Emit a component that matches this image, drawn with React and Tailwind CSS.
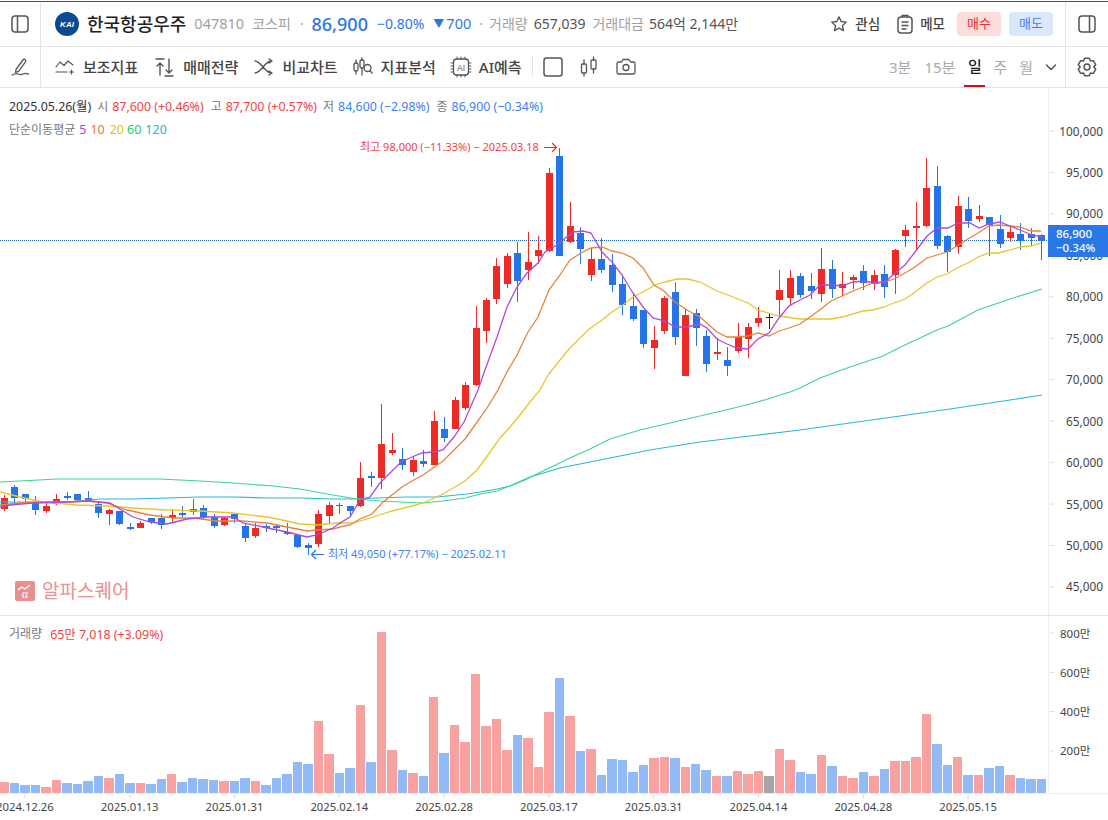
import React from "react";

// [몸통 위, 몸통 아래, 꼬리 위, 꼬리 아래, 색]
const CANDLES = [
  [498,509,495,511,"r"],[487,498,485,504,"b"],[494,499,494,503,"b"],[502,510,496,515,"b"],[506,511,503,513,"r"],
  [499,504,494,505,"r"],[496,498,492,500,"b"],[494,500,494,501,"b"],[498,501,491,502,"b"],[504,513,502,518,"b"],
  [510,514,509,525,"r"],[511,524,511,525,"b"],[527,529,523,530,"b"],[523,528,521,528,"r"],[518,522,518,524,"b"],
  [518,525,514,529,"b"],[515,518,509,522,"r"],[513,515,506,518,"b"],[509,512,499,515,"b"],[508,517,505,520,"b"],
  [517,526,514,528,"b"],[518,525,517,526,"r"],[514,519,513,523,"b"],[526,538,523,542,"b"],[528,536,523,538,"r"],
  [526,528,524,532,"b"],[526,528,524,533,"b"],[532,534,523,535,"b"],[535,547,535,548,"b"],[545,548,543,555,"b"],
  [514,544,510,547,"r"],[505,516,502,523,"r"],[505,506,503,514,"b"],[506,511,506,516,"b"],[478,506,462,507,"r"],
  [476,478,472,487,"b"],[444,478,404,489,"r"],[450,453,433,455,"r"],[459,465,448,470,"b"],[460,472,456,476,"r"],
  [461,464,450,467,"b"],[421,465,411,465,"r"],[429,438,417,442,"b"],[400,429,397,429,"r"],[385,408,382,410,"r"],
  [328,385,306,386,"r"],[300,331,298,343,"r"],[266,299,258,304,"r"],[256,284,253,288,"r"],[253,281,242,302,"b"],
  [262,270,232,280,"r"],[250,256,236,264,"r"],[173,251,168,252,"r"],[156,256,148,256,"b"],[226,242,202,243,"r"],
  [233,249,227,264,"b"],[259,275,248,281,"r"],[259,270,238,273,"b"],[265,285,254,292,"b"],[284,305,275,315,"b"],
  [306,319,294,321,"b"],[310,344,310,348,"b"],[340,348,326,369,"r"],[298,331,296,334,"r"],[292,337,282,345,"b"],
  [315,376,309,376,"r"],[313,328,309,346,"b"],[336,364,330,372,"b"],[352,354,338,360,"r"],[360,366,347,376,"b"],
  [337,351,323,353,"r"],[327,339,323,358,"r"],[318,323,307,327,"r"],[317,318,313,329,"k"],[290,300,270,316,"r"],
  [278,298,270,306,"r"],[276,295,273,298,"b"],[286,291,273,299,"b"],[269,294,248,302,"r"],[269,289,260,298,"b"],
  [284,288,272,296,"r"],[277,280,275,289,"r"],[271,283,265,290,"b"],[275,284,270,290,"r"],[274,287,265,298,"b"],
  [250,275,249,294,"r"],[230,236,225,247,"r"],[226,228,202,250,"r"],[188,226,158,227,"r"],[186,246,166,249,"b"],
  [236,252,235,272,"b"],[206,247,196,254,"r"],[209,221,197,228,"b"],[216,219,205,222,"r"],[217,225,217,256,"b"],
  [229,244,215,248,"b"],[232,238,227,242,"r"],[234,241,223,250,"b"],[234,238,228,246,"b"],[235,241,234,260,"b"],
];

const MA5 = "0,507 10,505 33,503 67,502 90,501 110,503 133,517 150,522 167,524 187,519 207,517 233,517 243,523 263,527 287,532 307,537 317,535 333,528 340,523 350,517 360,500 370,497 380,483 391,472 401,462 412,457 422,453 433,452 443,450 454,437 464,422 478,390 485,370 497,337 507,307 517,287 527,273 538,263 545,252 557,245 563,240 573,232 583,231 591,233 602,252 612,262 622,275 633,293 643,307 653,318 665,321 675,327 687,327 700,324 707,328 717,339 727,344 737,348 748,349 758,339 769,333 779,318 789,306 800,300 810,295 820,285 832,285 842,286 853,282 865,281 875,283 885,282 895,273 905,265 915,252 927,236 937,228 948,228 958,223 970,223 979,228 989,224 1000,222 1010,226 1020,230 1032,235 1042,237";
const MA10 = "0,505 20,503 43,502 67,502 87,501 107,503 127,510 150,515 173,518 193,518 217,521 243,521 267,523 287,527 307,531 317,530 333,529 340,527 350,525 360,519 372,514 382,503 402,487 412,481 423,475 433,468 443,461 454,450 465,439 475,425 487,408 498,390 507,372 517,355 528,332 538,317 549,290 560,275 570,260 581,253 591,248 602,247 612,251 622,253 633,258 643,268 654,285 664,291 675,302 687,310 700,317 717,332 727,337 737,337 748,336 758,333 769,336 779,331 789,328 800,324 810,317 821,309 831,301 842,296 853,291 863,287 873,283 884,282 894,279 905,273 915,267 927,258 937,255 947,252 957,246 968,239 978,233 989,226 999,225 1010,226 1020,227 1031,231 1041,231";
const MA20 = "0,492 20,497 43,502 77,505 107,506 133,508 167,510 200,511 233,513 267,517 287,521 300,524 317,525 337,523 353,523 370,518 392,511 412,506 423,503 443,494 465,481 477,470 488,455 500,438 510,427 520,415 530,402 540,390 548,375 560,360 570,348 588,330 602,320 612,312 623,305 633,297 643,292 655,285 665,282 677,279 688,279 700,282 717,291 733,297 748,303 758,310 779,316 800,319 820,319 831,319 842,317 863,311 873,310 884,307 894,303 905,299 915,292 927,283 937,277 947,274 957,268 968,263 978,257 989,253 999,253 1010,250 1020,247 1031,246 1041,243";
const MA60 = "0,482 20,481 57,479 107,479 160,479 200,481 233,483 273,486 300,489 333,495 357,499 380,501 400,502 423,503 443,501 465,498 480,494 497,491 510,486 525,480 545,470 570,458 590,449 610,439 640,430 670,423 700,416 730,409 750,404 768,399 780,395 790,392 800,388 820,378 850,367 883,356 907,344 937,330 948,326 978,310 1010,299 1042,289";
const MA120 = "0,502 33,502 67,502 100,499 133,499 167,498 200,497 233,497 267,498 300,498 333,499 353,499 377,498 407,497 437,497 467,494 480,492 497,489 510,486 530,477 560,468 600,460 650,450 700,442 750,436 800,430 850,423 900,416 950,409 1010,400 1042,395";

// 막대 윗변 y
const VOLUMES = [
  [782,"r"],[783,"b"],[785,"b"],[785,"b"],[787,"r"],[780,"r"],[783,"b"],[784,"b"],[781,"b"],[776,"b"],
  [778,"r"],[774,"b"],[783,"b"],[783,"r"],[784,"b"],[779,"b"],[774,"r"],[782,"b"],[778,"b"],[779,"b"],
  [780,"b"],[781,"r"],[781,"b"],[778,"b"],[781,"r"],[785,"b"],[778,"b"],[774,"b"],[762,"b"],[764,"b"],
  [721,"r"],[754,"r"],[773,"b"],[768,"b"],[705,"r"],[762,"b"],[632,"r"],[750,"r"],[770,"b"],[773,"r"],
  [776,"b"],[697,"r"],[753,"b"],[725,"r"],[742,"r"],[674,"r"],[726,"r"],[719,"r"],[750,"r"],[735,"b"],
  [738,"r"],[767,"r"],[712,"r"],[678,"b"],[716,"r"],[751,"b"],[749,"r"],[775,"b"],[759,"b"],[760,"b"],
  [772,"b"],[765,"b"],[758,"r"],[757,"r"],[758,"b"],[767,"r"],[764,"b"],[770,"b"],[776,"r"],[776,"b"],
  [771,"r"],[774,"r"],[771,"r"],[776,"g"],[749,"r"],[760,"r"],[772,"b"],[774,"b"],[755,"r"],[766,"b"],
  [776,"r"],[778,"r"],[772,"b"],[776,"r"],[769,"b"],[761,"r"],[761,"r"],[757,"r"],[714,"r"],[744,"b"],
  [765,"b"],[757,"r"],[775,"b"],[775,"r"],[768,"b"],[766,"b"],[775,"r"],[778,"b"],[779,"b"],[779,"b"],
];

const CANDLE_COLOR = { r: "#ee2a26", b: "#2575e8", k: "#222222" };
const VOLUME_COLOR = { r: "#f7a1a1", b: "#92bbf5", g: "#a6a6a6" };
const PRICES = ["100,000","95,000","90,000","85,000","80,000","75,000","70,000","65,000","60,000","55,000","50,000","45,000"];
const DATES = ["2024.12.26","2025.01.13","2025.01.31","2025.02.14","2025.02.28","2025.03.17","2025.03.31","2025.04.14","2025.04.28","2025.05.15"];

const centerX = (i) => Math.round(3.9 + 10.48 * i);

// 여섯 돌기 톱니바퀴 외곽선
const gearPoints = () => {
  const pts = [];
  for (let k = 0; k < 6; k++) {
    const a = -90 + k * 60;
    [[-30, 8.2], [-15, 10.8], [15, 10.8]].forEach(([d, r]) => {
      const t = ((a + d) * Math.PI) / 180;
      pts.push(`${(12 + r * Math.cos(t)).toFixed(2)},${(12 + r * Math.sin(t)).toFixed(2)}`);
    });
  }
  return pts.join(" ");
};

function Icon({ className = "", w = 20, h = 20, children }) {
  return (
    <svg width={w} height={h} viewBox={`0 0 ${w} ${h}`} fill="none" stroke="#555555" strokeWidth="1.5" strokeLinecap="round" strokeLinejoin="round" className={`shrink-0 ${className}`}>
      {children}
    </svg>
  );
}

function PriceChart() {
  return (
    <svg width="1048" height="527" viewBox="0 88 1048 527" className="block">
      <line x1="0" y1="240.5" x2="1048" y2="240.5" stroke="#1f66c9" strokeWidth="1" strokeDasharray="1 1" />
      {CANDLES.map((c, i) => {
        const x = centerX(i);
        const color = CANDLE_COLOR[c[4]];
        return (
          <g key={i} shapeRendering="crispEdges">
            <rect x={x} y={c[2]} width="1" height={c[3] - c[2]} fill={color} />
            {c[4] === "k"
              ? <rect x={x - 3} y={c[0]} width="7" height="1" fill={color} />
              : <rect x={x - 3} y={c[0]} width="7" height={c[1] - c[0]} fill={color} />}
          </g>
        );
      })}
      <polyline points={MA120} fill="none" stroke="#2bb8d8" strokeWidth="1.150" />
      <polyline points={MA60} fill="none" stroke="#3dd68c" strokeWidth="1.150" />
      <polyline points={MA20} fill="none" stroke="#e8c62e" strokeWidth="1.300" />
      <polyline points={MA10} fill="none" stroke="#e8833a" strokeWidth="1.300" />
      <polyline points={MA5} fill="none" stroke="#b04ad8" strokeWidth="1.300" />
      <path d="M544 147.500h12M552 143l4.500 4.500-4.500 4.500" fill="none" stroke="#ee2a26" strokeWidth="1.200" />
      <path d="M324 554.500h-12M316 550l-4.500 4.500 4.500 4.500" fill="none" stroke="#2575e8" strokeWidth="1.200" />
    </svg>
  );
}

function VolumeChart() {
  return (
    <svg width="1048" height="177" viewBox="0 616 1048 177" className="block" shapeRendering="crispEdges">
      {VOLUMES.map((v, i) => {
        const left = Math.round(3.9 + 10.48 * i - 4.6);
        const right = Math.round(3.9 + 10.48 * i + 4.9);
        return <rect key={i} x={left} y={v[0]} width={right - left} height={793 - v[0]} fill={VOLUME_COLOR[v[1]]} />;
      })}
    </svg>
  );
}

function PriceAxis() {
  return (
    <svg width="60" height="527" viewBox="1048 88 60 527" className="block">
      {PRICES.map((p, i) => {
        const y = 131 + 41.45 * i;
        return (
          <g key={p}>
            <line x1="1048" y1={y} x2="1053" y2={y} stroke="#dddddd" />
            <text x="1102" y={y + 4.5} textAnchor="end" fontSize="11.800" fill="#444444">{p}</text>
          </g>
        );
      })}
    </svg>
  );
}

function VolumeAxis() {
  return (
    <svg width="60" height="177" viewBox="1048 616 60 177" className="block">
      {["800만","600만","400만","200만"].map((p, i) => {
        const y = 633 + 39.3 * i;
        return (
          <g key={p}>
            <line x1="1048" y1={y} x2="1053" y2={y} stroke="#dddddd" />
            <text x="1059" y={y + 4.5} fontSize="11.500" fill="#444444">{p}</text>
          </g>
        );
      })}
    </svg>
  );
}

export default function App() {
  return (
    <div className="w-[1108px] h-[820px] overflow-hidden bg-white flex flex-col font-['Noto_Sans','Noto_Sans_CJK_KR',sans-serif] text-[#444444]">
      <div className="h-[2px] bg-white border-b border-[#c01f1f]" />

      {/* 상단 종목 정보 */}
      <div className="h-[45px] flex items-center border-b border-[#e4e4e4]">
        <div className="w-[41px] h-full flex items-center justify-center border-r border-[#e4e4e4]">
          <Icon w={18} h={18}>
            <rect x="1" y="1" width="16" height="16" rx="3" />
            <path d="M6.500 1v16" />
          </Icon>
        </div>
        <div className="flex-1 flex items-center pl-[14px] whitespace-nowrap">
          <svg width="24" height="24" viewBox="0 0 24 24" className="shrink-0">
            <circle cx="12" cy="12" r="12" fill="#0b4a8f" />
            <text x="12" y="15" textAnchor="middle" fontSize="8" fontWeight="700" fontStyle="italic" fill="#ffffff" fontFamily="Liberation Sans">KAI</text>
          </svg>
          <span className="ml-2 text-[18px] font-medium text-[#222222]">한국항공우주</span>
          <span className="ml-2 text-[14.500px] text-[#a0a0a0]">047810</span>
          <span className="ml-2 text-sm text-[#a0a0a0]">코스피</span>
          <span className="ml-[9px] text-sm text-[#a0a0a0]">·</span>
          <span className="ml-2 text-[18px] font-medium text-[#2a77e8]">86,900</span>
          <span className="ml-[9px] text-sm text-[#2a77e8]">−0.80%</span>
          <span className="ml-[9px] text-[11px] text-[#2a77e8]">▼</span>
          <span className="ml-[2px] text-[14.500px] text-[#2a77e8]">700</span>
          <span className="ml-2 text-sm text-[#a0a0a0]">·</span>
          <span className="ml-[6px] text-sm text-[#a0a0a0]">거래량</span>
          <span className="ml-[6px] text-sm text-[#555555]">657,039</span>
          <span className="ml-[7px] text-sm text-[#a0a0a0]">거래대금</span>
          <span className="ml-[5px] text-sm text-[#555555]">564억 2,144만</span>
        </div>
        <div className="flex items-center mr-3">
          <svg width="18" height="18" viewBox="0 0 24 24" fill="none" stroke="#555555" strokeWidth="1.800" strokeLinejoin="round" className="shrink-0">
            <path d="M12 2.500l2.900 6.200 6.800.8-5 4.600 1.300 6.700-6-3.300-6 3.300 1.300-6.700-5-4.600 6.800-.8z" />
          </svg>
          <span className="ml-[7px] text-[13.500px] font-medium">관심</span>
          <Icon className="ml-[16px]" w={18} h={20}>
            <rect x="2" y="3" width="14" height="16" rx="3" />
            <path d="M6 3V1.500h6V3M6 8h6M6 11.500h6M6 15h4" strokeWidth="1.300" />
          </Icon>
          <span className="ml-[6px] text-[13.500px] font-medium">메모</span>
          <button className="ml-3 w-[44px] h-[24px] rounded bg-[#fddcdc] text-[13px] text-[#f03030]">매수</button>
          <button className="ml-2 w-[44px] h-[24px] rounded bg-[#dbe7fc] text-[13px] text-[#3b82f6]">매도</button>
        </div>
        <div className="w-[43px] h-full flex items-center justify-center border-l border-[#e4e4e4]">
          <Icon w={18} h={18}>
            <rect x="1" y="1" width="16" height="16" rx="3" />
            <path d="M11.500 1v16" />
          </Icon>
        </div>
      </div>

      {/* 도구 모음 */}
      <div className="h-[41px] flex items-center border-b border-[#e4e4e4]">
        <div className="w-[41px] h-full flex items-center justify-center border-r border-[#e4e4e4]">
          <Icon w={20} h={20}>
            <path d="M6 12.500l7-9.500a1.500 1.500 0 0 1 2.500 1.800l-7 9.500-3 1.200z" strokeWidth="1.300" />
            <path d="M2 18c3-1.500 5-2 6.500-1s3 1 5-.2 3 .2 5 .2" strokeWidth="1.300" />
          </Icon>
        </div>
        <div className="flex-1 flex items-center pl-[14px] text-[15px] font-medium whitespace-nowrap">
          <Icon w={20} h={20}>
            <path d="M1 10l4-5 4 3.500L13 4l5 4" strokeWidth="1.200" />
            <path d="M1 15h11M14.500 15h4M16.500 13v4" strokeWidth="1.200" />
          </Icon>
          <span className="ml-2">보조지표</span>
          <Icon className="ml-[17px]" w={20} h={20}>
            <path d="M1 2h8M5 18V6M2 9l3-3 3 3M14 2v14M11 13l3 3 3-3M10 19h8" strokeWidth="1.400" />
          </Icon>
          <span className="ml-2">매매전략</span>
          <Icon className="ml-[16px]" w={20} h={20}>
            <path d="M1 4c6 0 10 12 16 12M1 16c6 0 10-12 16-12M15 2l3 2-3 2M15 14l3 2-3 2" strokeWidth="1.400" />
          </Icon>
          <span className="ml-2">비교차트</span>
          <Icon className="ml-[15px]" w={20} h={20}>
            <rect x="1" y="6" width="4" height="8" rx="1.500" strokeWidth="1.300" />
            <path d="M3 3v3M3 14v3" strokeWidth="1.300" />
            <rect x="7" y="3" width="4" height="8" rx="1.500" strokeWidth="1.300" />
            <path d="M9 1v2M9 11v7" strokeWidth="1.300" />
            <circle cx="14.500" cy="11" r="3.500" strokeWidth="1.300" />
            <path d="M17 13.500l2 2.500" strokeWidth="1.300" />
          </Icon>
          <span className="ml-2">지표분석</span>
          <Icon className="ml-[14px]" w={22} h={22}>
            <rect x="3.500" y="3" width="15" height="16" rx="3" strokeWidth="1.300" />
            <path d="M1 7h2M1 10h2M1 13h2M1 16h2M19 7h2M19 10h2M19 13h2M19 16h2M7 1v2M11 1v2M15 1v2M7 19v2M11 19v2M15 19v2" strokeWidth="1" />
            <text x="11" y="14.500" textAnchor="middle" fontSize="8.500" fontWeight="500" fill="#555555" stroke="none" fontFamily="Liberation Sans">AI</text>
          </Icon>
          <span className="ml-[7px]">AI예측</span>
          <div className="ml-[10px] w-px h-[20px] bg-[#e4e4e4]" />
          <Icon className="ml-[10px]" w={20} h={20}>
            <rect x="1" y="1" width="18" height="18" rx="2.500" strokeWidth="1.500" />
          </Icon>
          <Icon className="ml-[17px]" w={18} h={22}>
            <rect x="1.500" y="8" width="5" height="9" rx="1" strokeWidth="1.300" />
            <path d="M4 4v4M4 17v3" strokeWidth="1.300" />
            <rect x="11" y="4" width="5" height="9" rx="1" strokeWidth="1.300" />
            <path d="M13.500 1v3M13.500 13v4" strokeWidth="1.300" />
          </Icon>
          <Icon className="ml-[18px]" w={20} h={20}>
            <path d="M2.500 5h3l1.500-2.500h6L14.500 5h3a1.500 1.500 0 0 1 1.500 1.500v9a1.500 1.500 0 0 1-1.500 1.500h-15a1.500 1.500 0 0 1-1.500-1.500v-9a1.500 1.500 0 0 1 1.500-1.500z" strokeWidth="1.300" />
            <circle cx="10" cy="10.500" r="3" strokeWidth="1.300" />
          </Icon>
        </div>
        <div className="flex items-center h-full text-[15px] text-[#aaaaaa] pr-2">
          <span>3분</span>
          <span className="ml-[13px]">15분</span>
          <div className="ml-[9px] w-[21px] h-full flex items-center justify-center border-b-2 border-[#cc1111] text-[#222222] font-medium">일</div>
          <span className="ml-2">주</span>
          <span className="ml-3">월</span>
          <Icon className="ml-3" w={12} h={12}>
            <path d="M1.500 4l4.500 4.500L10.500 4" />
          </Icon>
        </div>
        <div className="w-[43px] h-full flex items-center justify-center border-l border-[#e4e4e4]">
          <svg width="20" height="20" viewBox="0 0 24 24" fill="none" stroke="#555555" strokeWidth="1.800" strokeLinejoin="round" className="shrink-0">
            <polygon points={gearPoints()} />
            <circle cx="12" cy="12" r="3.500" />
          </svg>
        </div>
      </div>

      {/* 가격 차트 */}
      <div className="h-[528px] flex border-b border-[#e4e4e4]">
        <div className="relative w-[1048px]">
          <PriceChart />
          <div className="absolute left-[9px] top-[10px] text-[12.400px] whitespace-nowrap">
            <div className="flex h-[18px] items-center">
              <span className="text-[#333333]">2025.05.26(월)</span>
              <span className="ml-[6px] text-xs text-[#777777]">시</span>
              <span className="ml-1 text-[#ef4444]">87,600 (+0.46%)</span>
              <span className="ml-[7px] text-xs text-[#777777]">고</span>
              <span className="ml-1 text-[#ef4444]">87,700 (+0.57%)</span>
              <span className="ml-[6px] text-xs text-[#777777]">저</span>
              <span className="ml-1 text-[#3b82f6]">84,600 (−2.98%)</span>
              <span className="ml-[7px] text-xs text-[#777777]">종</span>
              <span className="ml-1 text-[#3b82f6]">86,900 (−0.34%)</span>
            </div>
            <div className="flex h-[18px] items-center mt-[5px]">
              <span className="text-xs text-[#777777]">단순이동평균</span>
              <span className="ml-1 text-[12.500px] text-[#a83de0]">5</span>
              <span className="ml-1 text-[12.500px] text-[#e8782a]">10</span>
              <span className="ml-[5px] text-[12.500px] text-[#e8c000]">20</span>
              <span className="ml-[3px] text-[12.500px] text-[#22cc70]">60</span>
              <span className="ml-1 text-[12.500px] text-[#22b5d5]">120</span>
            </div>
          </div>
          <span className="absolute left-[360px] top-[51px] text-[11px] text-[#ef4444] whitespace-nowrap">최고 98,000 (−11.33%) − 2025.03.18</span>
          <span className="absolute left-[328px] top-[458px] text-[11px] text-[#3b82f6] whitespace-nowrap">최저 49,050 (+77.17%) − 2025.02.11</span>
          <div className="absolute left-[15px] top-[489px] flex items-center">
            <svg width="20" height="20" viewBox="0 0 20 20" className="shrink-0">
              <rect width="20" height="20" rx="2" fill="#e88f8f" />
              <path d="M3 9l4-3 3 2 5-4" fill="none" stroke="#ffffff" strokeWidth="1.200" />
              <text x="10" y="17" textAnchor="middle" fontSize="12" fill="#ffffff" stroke="none" fontFamily="Liberation Serif">α</text>
            </svg>
            <span className="ml-[7px] text-[19px] text-[#ec9090] whitespace-nowrap">알파스퀘어</span>
          </div>
        </div>
        <div className="relative w-[60px] border-l border-[#eeeeee]">
          <PriceAxis />
          <div className="absolute -left-px top-[137px] w-[60px] h-[32px] bg-[#2a77e8] text-[11.500px] font-medium leading-[14px] text-white pl-[8px] py-[2px]">
            <div>86,900</div>
            <div>−0.34%</div>
          </div>
        </div>
      </div>

      {/* 거래량 */}
      <div className="h-[178px] flex border-b border-[#eeeeee]">
        <div className="relative w-[1048px]">
          <VolumeChart />
          <div className="absolute left-[9px] top-[10px] flex whitespace-nowrap">
            <span className="text-xs text-[#777777]">거래량</span>
            <span className="ml-2 text-[12.400px] text-[#ef4444]">65만 7,018 (+3.09%)</span>
          </div>
        </div>
        <div className="w-[60px] border-l border-[#eeeeee]">
          <VolumeAxis />
        </div>
      </div>

      {/* 날짜 축 */}
      <svg width="1108" height="26" viewBox="0 794 1108 26" className="block">
        {DATES.map((d, i) => {
          const x = 24.9 + 104.8 * i;
          return (
            <g key={d}>
              <line x1={x} y1="794" x2={x} y2="798" stroke="#dddddd" />
              <text x={x} y="811" textAnchor="middle" fontSize="11.300" fill="#444444">{d}</text>
            </g>
          );
        })}
      </svg>
    </div>
  );
}
